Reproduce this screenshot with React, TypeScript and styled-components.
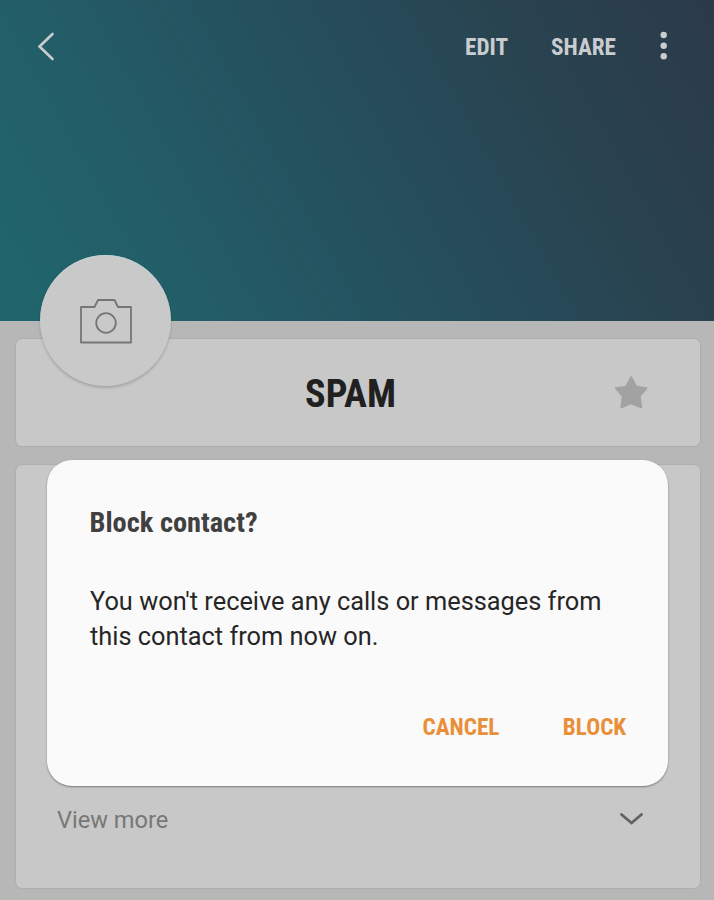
import React from 'react';
import styled, { createGlobalStyle } from 'styled-components';

const GlobalStyle = createGlobalStyle`
  * { box-sizing: border-box; }
  body { margin: 0; background: #b7b7b7; font-family: Roboto, 'Liberation Sans', sans-serif; }
  button { border: 0; padding: 0; background: none; font: inherit; color: inherit; }
`;

const Screen = styled.div`
  position: relative;
  width: 714px;
  height: 900px;
  overflow: hidden;
  background: #b7b7b7;
`;

const Header = styled.header`
  height: 321px;
  padding: 20px 38px 0 37px;
  background: linear-gradient(61deg, #20666c 0%, #235d67 24%, #264c5b 56%, #294451 74%, #2b3a49 100%);
`;

const Toolbar = styled.nav`
  display: flex;
  align-items: center;
  height: 54px;
  color: #c9cdd0;
`;

const Label = styled.span<{ $size: number; $width: number }>`
  display: block;
  width: ${(p) => p.$width}px;
  font-size: ${(p) => p.$size}px;
  font-weight: 700;
  font-stretch: 75%;
  line-height: 1.2;
  white-space: nowrap;
`;

const BackButton = styled.button`
  display: flex;
  margin-right: auto;
`;

const ToolButton = styled.button`
  margin-right: 43px;
  padding-top: 2px;
`;

const MoreButton = styled.button`
  display: flex;
  width: 8px;
  margin-left: 1px;
  margin-right: 8px;
`;

const Content = styled.main`
  display: flex;
  flex-direction: column;
  gap: 19px;
  padding: 18px 14px 0 16px;
`;

const Card = styled.section<{ $height: number }>`
  display: flex;
  height: ${(p) => p.$height}px;
  border-radius: 6px;
  background: #c8c8c8;
  box-shadow: 0 0 1px 1px rgba(0, 0, 0, 0.05);
`;

const NameCard = styled(Card)`
  align-items: center;
  padding-left: 289px;
  padding-right: 52.5px;
  justify-content: space-between;
  color: #202020;
`;

const Name = styled.div`
  padding-top: 2px;
`;

const DetailCard = styled(Card)`
  align-items: flex-end;
  justify-content: space-between;
  padding: 0 56px 53px 41px;
`;

const ViewMore = styled.span`
  font-size: 23.6px;
  line-height: 30px;
  color: #777;
`;

const Avatar = styled.div`
  position: absolute;
  left: 40px;
  top: 255px;
  width: 131px;
  height: 131px;
  display: flex;
  align-items: center;
  justify-content: center;
  border-radius: 50%;
  background: #c9c9c9;
  box-shadow: 0 2px 3px rgba(0, 0, 0, 0.18), inset 0 1px 1px rgba(195, 215, 218, 0.7);
`;

const Dialog = styled.div`
  position: absolute;
  left: 47px;
  top: 460px;
  width: 621px;
  height: 326px;
  padding: 46px 41.5px 0 42.5px;
  border-radius: 25px;
  background: #fafafa;
  box-shadow: 0 1px 2px rgba(0, 0, 0, 0.4);
`;

const Title = styled.div`
  color: #404040;
`;

const Message = styled.p`
  margin: 44px 0 0 0.5px;
  font-size: 25.35px;
  line-height: 35px;
  color: #262626;
  white-space: nowrap;
`;

const Actions = styled.div`
  display: flex;
  justify-content: flex-end;
  gap: 63px;
  margin-top: 60px;
  color: #e98f39;
`;

export default function App() {
  return (
    <>
      <GlobalStyle />
      <Screen>
        <Header>
          <Toolbar>
            <BackButton aria-label="Back">
              <svg width="20" height="30" viewBox="0 0 20 30" fill="none" stroke="currentColor" strokeWidth="2.6">
                <path d="M15.5 2 2.5 14.5 15.5 27" strokeLinecap="round" />
              </svg>
            </BackButton>
            <ToolButton><Label $size={23.2} $width={43}>EDIT</Label></ToolButton>
            <ToolButton><Label $size={23.2} $width={65}>SHARE</Label></ToolButton>
            <MoreButton aria-label="More options">
              <svg width="8" height="32" viewBox="0 0 8 32" fill="currentColor">
                <circle cx="3.7" cy="4" r="3.2" />
                <circle cx="3.7" cy="14.7" r="3.2" />
                <circle cx="3.7" cy="25.2" r="3.2" />
              </svg>
            </MoreButton>
          </Toolbar>
        </Header>
        <Content>
          <NameCard $height={107}>
            <Name><Label $size={38.3} $width={91}>SPAM</Label></Name>
            <svg width="34" height="34" viewBox="0 0 34 34" fill="#a2a2a2" stroke="#a2a2a2" strokeWidth="2" strokeLinejoin="round">
              <path d="M17.2 1.2 22.3 10.7 32.4 12.3 25.6 20.2 27.2 31.3 17.2 27.2 7.4 31.3 8.8 20.2 2 12.3 12.1 10.7Z" />
            </svg>
          </NameCard>
          <DetailCard $height={423}>
            <ViewMore>View more</ViewMore>
            <svg width="25" height="30" viewBox="0 0 25 30" fill="none" stroke="#626262" strokeWidth="2.8" strokeLinecap="round">
              <path d="M2.5 9.5 12.5 18 22.5 9.5" />
            </svg>
          </DetailCard>
        </Content>
        <Avatar>
          <svg width="54" height="46" viewBox="0 0 54 46" fill="none" stroke="#757575" strokeWidth="1.8" strokeLinejoin="round">
            <path d="M2 9H15.5L19 2H35.5L39 9H52V44.5H2Z" />
            <circle cx="27" cy="25" r="9.8" />
          </svg>
        </Avatar>
        <Dialog role="dialog">
          <Title><Label $size={28.4} $width={168}>Block contact?</Label></Title>
          <Message>You won't receive any calls or messages from<br />this contact from now on.</Message>
          <Actions>
            <button><Label $size={23.2} $width={77}>CANCEL</Label></button>
            <button><Label $size={23.2} $width={64}>BLOCK</Label></button>
          </Actions>
        </Dialog>
      </Screen>
    </>
  );
}
